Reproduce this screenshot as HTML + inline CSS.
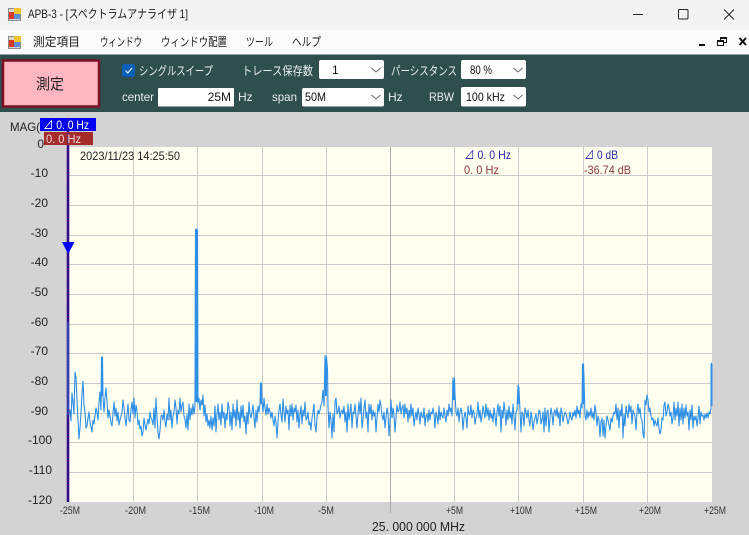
<!DOCTYPE html>
<html><head><meta charset="utf-8"><style>
html,body{margin:0;padding:0;background:#d3d3d3;overflow:hidden}
svg{display:block}
text{font-family:"Liberation Sans","Noto Sans CJK JP",sans-serif;font-size:12px;dominant-baseline:auto}
.j{fill:#1a1a1a}
.w{fill:#e8eeee}
.y{text-anchor:end;fill:#222}
.x{font-size:11px;fill:#333}
</style></head><body>
<svg width="749" height="535" viewBox="0 0 749 535" xmlns="http://www.w3.org/2000/svg">
<rect width="749" height="535" fill="#d3d3d3"/>
<rect width="749" height="30" fill="#f3f3f3"/>
<rect y="30" width="749" height="24" fill="#fbfbfb"/>
<rect y="54" width="749" height="2" fill="#9a9f9f"/>
<rect y="55" width="749" height="57" fill="#2f4f4f"/>
<!-- icons -->
<g id="ic"><rect x="8.500" y="8.500" width="12" height="12" fill="#d8d8d0" stroke="#8c8c8c"/><rect x="14" y="8" width="7" height="6" fill="#f2c230"/><rect x="9" y="12" width="5" height="7" fill="#d83a2a"/><rect x="14" y="14" width="6" height="5" fill="#5a8fd8"/></g>
<g transform="translate(0,28)"><rect x="8.500" y="8.500" width="12" height="12" fill="#d8d8d0" stroke="#8c8c8c"/><rect x="14" y="8" width="7" height="6" fill="#f2c230"/><rect x="9" y="12" width="5" height="7" fill="#d83a2a"/><rect x="14" y="14" width="6" height="5" fill="#5a8fd8"/></g>
<text x="28" y="18" class="j" textLength="160" lengthAdjust="spacingAndGlyphs">APB-3 - [スペクトラムアナライザ 1]</text>
<path d="M633 14.500H643" stroke="#222" fill="none"/>
<rect x="678.500" y="9.500" width="9.500" height="9.500" rx="1" stroke="#222" fill="none"/>
<path d="M724 9.500L734 19.500M734 9.500L724 19.500" stroke="#222" fill="none"/>
<text x="33" y="46" class="j" textLength="47" lengthAdjust="spacingAndGlyphs">測定項目</text>
<text x="100" y="46" class="j" textLength="42" lengthAdjust="spacingAndGlyphs">ウィンドウ</text>
<text x="161" y="46" class="j" textLength="66" lengthAdjust="spacingAndGlyphs">ウィンドウ配置</text>
<text x="246" y="46" class="j" textLength="27" lengthAdjust="spacingAndGlyphs">ツール</text>
<text x="292" y="46" class="j" textLength="29" lengthAdjust="spacingAndGlyphs">ヘルプ</text>
<path d="M699 45H705" stroke="#111" stroke-width="2" fill="none"/>
<path d="M720.500 40V37.500H726.500V42.500H724M717.500 40.500H723.500V45.500H717.500Z M720.500 38.500H726.500M717.500 41.500H723.500" stroke="#111" fill="none"/>
<path d="M739.500 38L746 45M746 38L739.500 45" stroke="#111" stroke-width="2" fill="none"/>
<!-- toolbar -->
<rect x="3" y="60.500" width="96" height="46" fill="#ffb6c1" stroke="#7b0f24" stroke-width="2.500"/>
<text x="36" y="89" font-size="15" style="font-size:15px" fill="#222" textLength="28" lengthAdjust="spacingAndGlyphs">測定</text>
<rect x="122" y="64" width="13" height="13" rx="2.500" fill="#0a60b8"/>
<path d="M125.500 70.500L127.800 73L132 68" stroke="#fff" fill="none"/>
<text x="139" y="75" class="w" textLength="74" lengthAdjust="spacingAndGlyphs">シングルスイープ</text>
<text x="242" y="75" class="w" textLength="71" lengthAdjust="spacingAndGlyphs">トレース保存数</text>
<rect x="319" y="60" width="65" height="19" rx="2" fill="#fff"/>
<text x="332" y="74" fill="#111">1</text>
<path d="M371.500 68L376 72L380.500 68" stroke="#666" fill="none"/>
<text x="391" y="75" class="w" textLength="66" lengthAdjust="spacingAndGlyphs">パーシスタンス</text>
<rect x="461" y="60" width="65" height="19" rx="2" fill="#fff"/>
<text x="470" y="74" fill="#111" textLength="22" lengthAdjust="spacingAndGlyphs">80 %</text>
<path d="M513.500 68L518 72L522.500 68" stroke="#666" fill="none"/>
<text x="122" y="101" class="w" textLength="32" lengthAdjust="spacingAndGlyphs">center</text>
<rect x="158" y="88" width="76" height="18.500" rx="1" fill="#fff"/>
<text x="231" y="101" fill="#111" text-anchor="end">25M</text>
<text x="238" y="101" class="w">Hz</text>
<text x="272" y="101" class="w" textLength="25" lengthAdjust="spacingAndGlyphs">span</text>
<rect x="302" y="88" width="82" height="18.500" rx="2" fill="#fff"/>
<text x="305" y="101" fill="#111" textLength="21" lengthAdjust="spacingAndGlyphs">50M</text>
<path d="M371.500 95L376 99L380.500 95" stroke="#666" fill="none"/>
<text x="388" y="101" class="w">Hz</text>
<text x="429" y="101" class="w" textLength="25" lengthAdjust="spacingAndGlyphs">RBW</text>
<rect x="461" y="87" width="65" height="19.500" rx="2" fill="#fff"/>
<text x="466" y="101" fill="#111" textLength="39" lengthAdjust="spacingAndGlyphs">100 kHz</text>
<path d="M513.500 95L518 99L522.500 95" stroke="#666" fill="none"/>
<!-- plot -->
<rect x="68" y="147" width="644" height="355" fill="#fffff0"/>
<g stroke="#cacac6" fill="none">
<path d="M68 175.500H712M68 205.500H712M68 235.500H712M68 264.500H712M68 294.500H712M68 324.500H712M68 353.500H712M68 383.500H712M68 413.500H712M68 442.500H712M68 472.500H712"/>
<path d="M133.500 147V502M197.500 147V502M262.500 147V502M326.500 147V502M454.500 147V502M518.500 147V502M583.500 147V502M647.500 147V502"/>
</g>
<path d="M390.500 147V513" stroke="#a8a8a8" fill="none"/>
<polyline fill="none" stroke="#2f8fe6" stroke-width="1.100" stroke-linejoin="round" points="68,322 68.500,416 70,410 71,421 72,393 73,402 74,414 75,372 76,378 77,400 78,420 79,439 80,428 81,412 82,394 83,381 84,405 85,412 86,428 87,426 88,418 89,412 90,422 91,427 92,432 93,420 94,424 96,408 97,412 98,420 99,402 100,392 101,410 101.500,357 102.500,357 103,398 104,412 105,398 106,388 107,402 108,418 109,410 111,423 112,426 113,413 114,402 115,416 116,408 117,421 118,412 119,425 120,420 122,412 123,400 124,408 125,418 126,426 127,415 128,404 129,420 130,422 131,410 132,402 133,414 134,398 135,418 136,405 137,411 138,425 139,420 140,429 141,426 142,436 143,432 144,418 145,425 146,430 147,424 148,419 149,424 150,412 151,418 152,420 153,425 154,408 155,428 156,398 157,418 158,432 159,439 160,430 161,416 162,415 163,420 164,410 165,422 166,427 167,414 168,420 169,398 170,420 171,410 172,428 173,416 174,412 175,400 176,408 177,424 178,410 179,414 180,398 181,412 182,405 183,402 184,416 185,420 186,428 187,414 188,430 189,404 190,420 191,408 192,415 193,404 194,414 195,406 195.500,229 196.500,232 197,229 197.500,232 198,403 199,398 200,410 201,400 202,405 203,395 204,416 205,405 206,422 207,414 208,426 209,420 210,428 211,416 212,430 213,418 214,426 215,406 216,432 217,414 218,404 219,420 220,412 221,425 222,404 223,418 224,412 225,428 226,414 227,420 228,402 229,408 230,426 231,412 232,430 233,404 234,418 235,410 236,426 237,400 238,420 239,412 240,428 241,406 242,418 243,405 244,422 245,416 246,434 247,412 248,424 249,402 250,414 251,418 252,412 253,405 254,418 255,428 256,410 257,422 258,406 259,412 260,404 260.500,383 261.500,383 262,402 263,412 264,398 265,408 266,415 267,404 268,414 269,408 270,412 271,418 272,412 273,420 274,426 275,416 276,422 277,438 278,422 279,410 280,404 281,415 282,422 283,399 284,412 285,422 286,406 287,414 288,410 289,430 290,405 291,416 292,404 293,420 294,408 295,412 296,405 297,422 298,410 299,428 300,414 301,406 302,424 303,410 304,416 305,402 306,420 307,418 308,412 309,425 310,422 311,430 312,418 313,412 314,404 315,425 316,432 317,418 318,410 319,414 320,410 321,405 322,402 323,390 324,406 325,356 326.500,356 327.500,370 328,406 329,428 330,412 331,420 332,438 333,414 334,432 335,402 336,398 337,414 338,412 339,406 340,418 341,412 342,410 343,414 344,406 345,422 346,412 347,432 348,404 349,420 350,412 351,404 352,428 353,412 354,414 355,404 356,416 357,428 358,414 359,402 360,414 361,398 362,428 363,420 364,408 365,400 366,418 367,412 368,432 369,404 370,414 371,405 372,420 373,410 374,416 375,412 376,432 377,418 378,404 379,412 380,400 381,406 382,416 383,420 384,412 385,428 386,418 387,408 388,414 389,436 390,422 391,400 392,418 393,408 394,416 395,432 396,418 397,405 398,412 399,410 400,402 401,414 402,408 403,405 404,418 405,404 406,414 407,408 408,422 409,410 410,418 411,404 412,416 413,408 414,426 415,418 416,412 417,420 418,408 419,414 420,424 421,412 422,416 423,418 424,408 425,426 426,416 427,414 428,422 429,410 430,420 431,412 432,414 433,408 434,414 435,428 436,412 437,416 438,424 439,406 440,420 441,412 442,416 443,418 444,408 445,416 446,422 447,410 448,416 449,404 450,412 451,408 452,416 453,378 454.500,378 455,395 456,412 457,416 458,408 459,422 460,412 461,408 462,414 463,430 464,418 465,412 466,418 467,428 468,406 469,414 470,415 471,405 472,418 473,410 474,412 475,424 476,418 477,414 478,402 479,418 480,410 481,422 482,416 483,406 484,412 485,418 486,404 487,416 488,408 489,420 490,410 491,418 492,414 493,422 494,408 495,416 496,426 497,412 498,404 499,416 500,406 501,432 502,410 503,418 504,402 505,412 506,425 507,410 508,420 509,406 510,418 511,412 512,424 513,404 514,416 515,430 516,412 517,410 518,385 519,390 520,410 521,432 522,412 523,414 524,426 525,408 526,412 527,418 528,410 529,420 530,426 531,412 532,418 533,430 534,422 535,418 536,414 537,424 538,418 539,410 540,412 541,424 542,420 543,412 544,432 545,408 546,426 547,412 548,410 549,432 550,418 551,408 552,414 553,425 554,412 555,410 556,416 557,408 558,418 559,412 560,426 561,408 562,412 563,422 564,416 565,412 566,414 567,418 568,424 569,420 570,412 571,418 572,420 573,412 574,416 575,410 576,418 577,406 578,414 579,410 580,418 581,404 582,408 582.500,364 583.500,364 584,378 585,416 586,420 587,410 588,418 589,412 590,416 591,408 592,418 593,412 594,420 595,405 596,412 597,426 598,416 599,420 600,437 601,422 602,418 603,436 604,420 605,438 606,426 607,416 608,420 609,425 610,430 611,418 612,422 613,416 614,412 615,414 616,404 617,420 618,408 619,428 620,410 621,416 622,404 623,438 624,414 625,426 626,406 627,412 628,418 629,404 630,412 631,406 632,424 633,410 634,414 635,416 636,430 637,412 638,404 639,414 640,408 641,418 642,420 643,434 644,438 645,400 646,405 647,395 648,400 649,412 650,408 651,416 652,420 653,418 654,426 655,420 656,424 657,426 658,418 659,428 660,434 661,430 662,418 663,420 664,405 665,402 666,416 667,412 668,404 669,408 670,416 671,412 672,424 673,418 674,402 675,420 676,408 677,416 678,402 679,426 680,408 681,420 682,404 683,424 684,408 685,418 686,405 687,416 688,412 689,430 690,410 691,420 692,405 693,428 694,416 695,420 696,416 697,426 698,418 699,406 700,424 701,412 702,416 703,415 704,420 705,414 706,418 707,413 708,418 709,412 710,414 711,408 711.500,363 712,363"/>
<path d="M196.500 231V402M102 358V396M326 358V396M583 366V404M454 380V400M261 385V404M518.500 387V404M711.500 364V406" stroke="#2f8fe6" stroke-width="2" fill="none"/>
<!-- markers -->
<path d="M68 118V502" stroke="#14108c" stroke-width="2.500" fill="none"/>
<path d="M68 118V502" stroke="#5a0a80" stroke-width="2.500" stroke-dasharray="1.500 1.500" fill="none"/>
<path d="M68 322V415" stroke="#2f6fe0" stroke-width="1" fill="none"/>
<rect x="40" y="118" width="56" height="13" fill="#0000f0"/>
<rect x="44" y="132" width="49" height="13" fill="#a52a2a"/>
<path d="M62 242H74.500L68.200 254Z" fill="#0000f0"/>
<path d="M68 118V145" stroke="#3a1a9a" stroke-width="1.500" fill="none" stroke-dasharray="1.500 1.500"/>
<text x="10" y="131" fill="#222" textLength="30" lengthAdjust="spacingAndGlyphs">MAG(</text>
<text x="43" y="129" fill="#fff" textLength="46" lengthAdjust="spacingAndGlyphs">⊿ 0. 0 Hz</text>
<text x="46" y="143" fill="#f0dcdc" textLength="35" lengthAdjust="spacingAndGlyphs">0. 0 Hz</text>
<text x="80" y="160" fill="#222" textLength="100" lengthAdjust="spacingAndGlyphs">2023/11/23 14:25:50</text>
<text x="464" y="159" fill="#2a2aa8" textLength="47" lengthAdjust="spacingAndGlyphs">⊿ 0. 0 Hz</text>
<text x="464" y="174" fill="#8c3a3a" textLength="35" lengthAdjust="spacingAndGlyphs">0. 0 Hz</text>
<text x="584" y="159" fill="#2a2aa8" textLength="34" lengthAdjust="spacingAndGlyphs">⊿ 0 dB</text>
<text x="584" y="174" fill="#8c3a3a" textLength="47" lengthAdjust="spacingAndGlyphs">-36.74 dB</text>
<!-- y axis -->
<text class="y" x="44" y="148">0</text>
<text class="y" x="48" y="177">-10</text>
<text class="y" x="48" y="207">-20</text>
<text class="y" x="48" y="237">-30</text>
<text class="y" x="48" y="266">-40</text>
<text class="y" x="48" y="296">-50</text>
<text class="y" x="48" y="326">-60</text>
<text class="y" x="48" y="355">-70</text>
<text class="y" x="48" y="385">-80</text>
<text class="y" x="48" y="415">-90</text>
<text class="y" x="52" y="444">-100</text>
<text class="y" x="52" y="474">-110</text>
<text class="y" x="52" y="504">-120</text>
<!-- x axis -->
<text class="x" x="60" y="514" textLength="20" lengthAdjust="spacingAndGlyphs">-25M</text>
<text class="x" x="125" y="514" textLength="21" lengthAdjust="spacingAndGlyphs">-20M</text>
<text class="x" x="189" y="514" textLength="21" lengthAdjust="spacingAndGlyphs">-15M</text>
<text class="x" x="254" y="514" textLength="20" lengthAdjust="spacingAndGlyphs">-10M</text>
<text class="x" x="318" y="514" textLength="16" lengthAdjust="spacingAndGlyphs">-5M</text>
<text class="x" x="446" y="514" textLength="17" lengthAdjust="spacingAndGlyphs">+5M</text>
<text class="x" x="510" y="514" textLength="22" lengthAdjust="spacingAndGlyphs">+10M</text>
<text class="x" x="575" y="514" textLength="22" lengthAdjust="spacingAndGlyphs">+15M</text>
<text class="x" x="639" y="514" textLength="22" lengthAdjust="spacingAndGlyphs">+20M</text>
<text class="x" x="704" y="514" textLength="22" lengthAdjust="spacingAndGlyphs">+25M</text>
<text x="372" y="531" fill="#222" style="font-size:12.500px" textLength="93" lengthAdjust="spacingAndGlyphs">25. 000 000 MHz</text>
</svg>
</body></html>
